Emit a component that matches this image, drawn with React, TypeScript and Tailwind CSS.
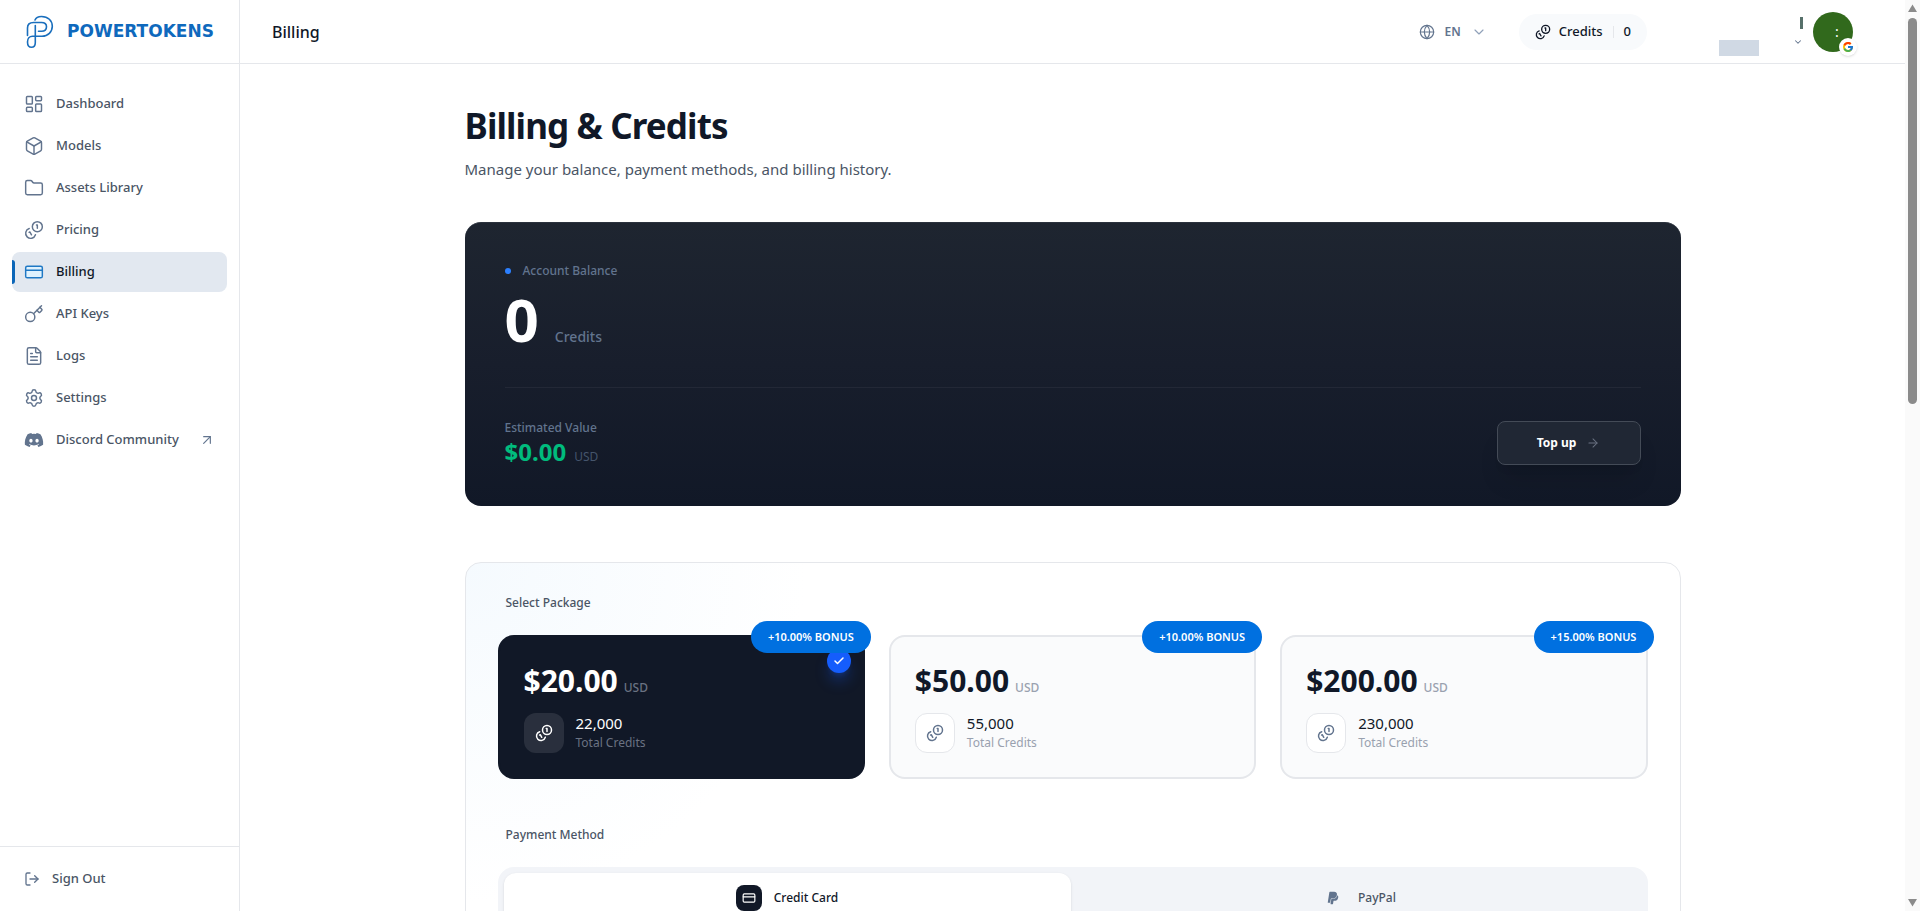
import React, { useState } from 'react';
import {
  ArrowRight,
  ArrowUpRight,
  Box,
  Check,
  ChevronDown,
  CreditCard,
  FileText,
  Folder,
  Globe,
  Key,
  LayoutDashboard,
  LogOut,
  Settings,
} from 'lucide-react';
import { FaDiscord, FaPaypal } from 'react-icons/fa';
import { FcGoogle } from 'react-icons/fc';

interface NavItem {
  label: string;
  icon: React.ElementType;
  external?: boolean;
}

interface Package {
  price: string;
  credits: string;
  bonus: string;
}

interface CoinsProps {
  size?: number;
  strokeWidth?: number;
  className?: string;
}

const Coins: React.FC<CoinsProps> = ({ size = 20, strokeWidth = 1.75, className }) => (
  <svg
    width={size}
    height={size}
    viewBox="0 0 24 24"
    fill="none"
    stroke="currentColor"
    strokeWidth={strokeWidth}
    strokeLinecap="round"
    strokeLinejoin="round"
    className={className}
  >
    <path d="M13.744 17.736a6 6 0 1 1-7.48-7.48" />
    <path d="M15 6h1v4" />
    <path d="m6.134 14.768.866-.5 2 3.464" />
    <circle cx="16" cy="8" r="6" />
  </svg>
);

const NAV: NavItem[] = [
  { label: 'Dashboard', icon: LayoutDashboard },
  { label: 'Models', icon: Box },
  { label: 'Assets Library', icon: Folder },
  { label: 'Pricing', icon: Coins },
  { label: 'Billing', icon: CreditCard },
  { label: 'API Keys', icon: Key },
  { label: 'Logs', icon: FileText },
  { label: 'Settings', icon: Settings },
  { label: 'Discord Community', icon: FaDiscord, external: true },
];

const PACKAGES: Package[] = [
  { price: '$20.00', credits: '22,000', bonus: '+10.00% BONUS' },
  { price: '$50.00', credits: '55,000', bonus: '+10.00% BONUS' },
  { price: '$200.00', credits: '230,000', bonus: '+15.00% BONUS' },
];

const METHODS = [
  { id: 'card', label: 'Credit Card', icon: CreditCard },
  { id: 'paypal', label: 'PayPal', icon: FaPaypal },
];

const Logo = () => (
  <a href="#" className="flex h-16 shrink-0 items-center gap-3 border-b border-gray-200 pl-6">
    <svg width="31" height="34" viewBox="0 0 31 34" fill="none" stroke="#1a6fbd" strokeWidth="1.6" strokeLinecap="round">
      <path d="M11 5C12 2.500 14.500 1.500 17.500 1.500C24 1.500 28.300 5.500 28.300 11.300C28.300 17 24 21.300 18 21.300H8.500C5.500 21.300 3.500 23.500 3.500 27C3.500 30.300 5.200 32.300 7.500 32.300C10 32.300 11.300 30.300 11.300 27.500V10.500" />
      <path d="M3.500 20.500V13C3.500 9.500 6 7.500 9.500 7.500H17.500C20.500 7.500 22.500 9.300 22.500 11.800C22.500 14.400 20.500 16.200 17.500 16.200H14.500" />
    </svg>
    <span className="font-['DejaVu_Sans',sans-serif] text-[17px] font-bold text-[#0f69bd]">POWERTOKENS</span>
  </a>
);

const Sidebar = () => (
  <aside className="flex w-60 shrink-0 flex-col border-r border-gray-200">
    <Logo />
    <nav className="flex flex-1 flex-col gap-0.5 px-3 py-5">
      {NAV.map(({ label, icon: Icon, external }) => {
        const active = label === 'Billing';
        return (
          <a
            key={label}
            href="#"
            className={
              active
                ? 'relative flex h-10 items-center gap-3 rounded-lg bg-slate-200 px-3 text-[13px] font-medium text-gray-900'
                : 'flex h-10 items-center gap-3 rounded-lg px-3 text-[13px] font-medium text-gray-600'
            }
          >
            {active && <span className="absolute top-2 left-0 h-6 w-[3px] rounded-r-full bg-[#0b66b8]" />}
            <Icon size={20} strokeWidth={external ? 0 : 1.75} className={active ? 'fill-sky-100 text-[#1f78c4]' : 'text-slate-500'} />
            <span className="flex-1">{label}</span>
            {external && <ArrowUpRight size={16} strokeWidth={1.75} className="text-slate-500" />}
          </a>
        );
      })}
    </nav>
    <div className="border-t border-gray-200 p-3">
      <button className="flex h-10 w-full items-center gap-3 px-3 text-[13px] font-medium text-gray-600">
        <LogOut size={16} strokeWidth={2} className="text-slate-500" />
        Sign Out
      </button>
    </div>
  </aside>
);

const Header = () => (
  <header className="flex h-16 shrink-0 items-center justify-between border-b border-gray-200 pr-13 pl-8">
    <span className="text-base font-medium text-gray-900">Billing</span>
    <div className="flex items-center">
      <button className="mr-8 flex items-center gap-2.5 text-xs font-semibold text-slate-500">
        <Globe size={16} strokeWidth={1.75} />
        EN
        <ChevronDown size={16} strokeWidth={1.75} className="text-slate-400" />
      </button>
      <a href="#" className="mr-18 flex h-9 items-center gap-2 rounded-full bg-slate-50 px-4 text-[13px] font-medium text-gray-900">
        <Coins size={16} strokeWidth={2} />
        Credits
        <span className="mx-0.5 h-3 w-px bg-gray-200" />
        <span>0</span>
      </a>
      <button aria-label="Account" className="flex items-center gap-2.5">
        <span className="mt-8 mr-6 h-4 w-10 bg-[#d0d9e4]" />
        <span className="flex flex-col items-end gap-2">
          <span className="h-3 w-[3px] bg-[#56706a]" />
          <ChevronDown size={10} strokeWidth={2.5} className="text-slate-500" />
        </span>
        <span className="relative flex size-10 items-center justify-center rounded-full bg-[#31691c] pl-2 text-sm text-white">
          :
          <span className="absolute -right-1 -bottom-1 flex size-[18px] items-center justify-center rounded-full bg-white shadow-sm">
            <FcGoogle size={12} />
          </span>
        </span>
      </button>
    </div>
  </header>
);

const BalanceCard = () => (
  <section className="rounded-2xl border-t border-[#2b323d] bg-linear-to-b from-[#1e2530] via-[#181e2c] to-[#111827] p-10">
    <div className="flex items-center gap-3 text-xs font-medium text-slate-500">
      <span className="size-1.5 rounded-full bg-blue-500" />
      Account Balance
    </div>
    <div className="mt-2.5 flex items-baseline gap-4">
      <span className="text-6xl font-bold text-white">0</span>
      <span className="text-sm font-medium text-slate-500">Credits</span>
    </div>
    <div className="mt-[38px] flex items-center justify-between border-t border-white/5 pt-8">
      <div>
        <div className="text-xs font-medium text-slate-500">Estimated Value</div>
        <div className="mt-0.5 flex items-baseline gap-2">
          <span className="text-2xl leading-7 font-bold text-emerald-500">$0.00</span>
          <span className="text-xs text-slate-600">USD</span>
        </div>
      </div>
      <button className="flex h-11 w-36 items-center justify-center gap-2.5 rounded-lg border border-[#444b57] bg-[#202734] text-xs font-bold text-white shadow-xl">
        Top up
        <ArrowRight size={14} strokeWidth={1.75} className="text-gray-500" />
      </button>
    </div>
  </section>
);

interface PackageCardProps {
  item: Package;
  selected: boolean;
  onSelect: () => void;
}

const PackageCard: React.FC<PackageCardProps> = ({ item, selected, onSelect }) => (
  <button
    onClick={onSelect}
    aria-pressed={selected}
    className={
      selected
        ? 'relative rounded-2xl border-2 border-[#111827] bg-[#111827] p-6 text-left text-white'
        : 'relative rounded-2xl border-2 border-gray-200 bg-[#fafbfc] p-6 text-left text-gray-900'
    }
  >
    {selected && (
      <span className="absolute top-3 right-3 flex size-6 items-center justify-center rounded-full bg-blue-600 shadow-lg shadow-blue-600/40">
        <Check size={12} strokeWidth={3} className="text-white" />
      </span>
    )}
    <span className="absolute -top-4 -right-2 flex h-8 w-[120px] items-center justify-center rounded-full bg-[#0070e0] text-[11px] font-semibold whitespace-nowrap text-white">
      {item.bonus}
    </span>
    <div className="flex items-baseline gap-1.5">
      <span className="text-3xl leading-10 font-bold">{item.price}</span>
      <span className={selected ? 'text-xs font-medium text-gray-500' : 'text-xs font-medium text-gray-400'}>USD</span>
    </div>
    <div className="mt-3 flex items-center gap-3">
      <span
        className={
          selected
            ? 'flex size-10 items-center justify-center rounded-xl bg-white/10 text-white'
            : 'flex size-10 items-center justify-center rounded-xl border border-gray-200 bg-white text-slate-500'
        }
      >
        <Coins size={18} strokeWidth={2} />
      </span>
      <span className="flex flex-col">
        <span className="text-[15px] leading-5">{item.credits}</span>
        <span className={selected ? 'text-xs leading-5 text-gray-500' : 'text-xs leading-5 text-gray-400'}>Total Credits</span>
      </span>
    </div>
  </button>
);

const TopUpPanel = () => {
  const [selected, setSelected] = useState(0);
  const [method, setMethod] = useState('card');

  return (
    <section className="rounded-2xl border border-gray-200 bg-[radial-gradient(circle_at_top_left,#f5fafe,#ffffff_340px)] p-8">
      <h2 className="mb-6 px-2 text-xs font-medium text-gray-600">Select Package</h2>
      <div className="grid grid-cols-3 gap-6">
        {PACKAGES.map((item, i) => (
          <PackageCard key={item.price} item={item} selected={selected === i} onSelect={() => setSelected(i)} />
        ))}
      </div>
      <h2 className="mt-12 mb-6 px-2 text-xs font-medium text-gray-600">Payment Method</h2>
      <div className="grid grid-cols-2 gap-1 rounded-2xl bg-[#f2f4f8] p-1.5">
        {METHODS.map(({ id, label, icon: Icon }) => (
          <button
            key={id}
            onClick={() => setMethod(id)}
            aria-pressed={method === id}
            className={
              method === id
                ? 'flex h-[50px] items-center justify-center gap-3 rounded-xl bg-white text-xs font-medium text-gray-900 shadow-sm'
                : 'flex h-[50px] items-center justify-center gap-3 rounded-xl text-xs font-medium text-gray-600'
            }
          >
            <span
              className={
                method === id
                  ? 'flex size-[26px] items-center justify-center rounded-lg bg-[#111827] text-white'
                  : 'flex size-[26px] items-center justify-center text-slate-500'
              }
            >
              <Icon size={14} />
            </span>
            {label}
          </button>
        ))}
      </div>
    </section>
  );
};

// Window scroll rail
const ScrollRail = () => (
  <div aria-hidden="true" className="flex w-[15px] shrink-0 flex-col items-center justify-between bg-[#fafafa] py-1">
    <div className="flex flex-col items-center gap-1.5">
      <svg width="9" height="8" viewBox="0 0 9 8" fill="#8b8b8b"><path d="M4.500 0.500L9 8H0Z" /></svg>
      <div className="h-[386px] w-[9px] rounded-full bg-[#8b8b8b]" />
    </div>
    <svg width="9" height="8" viewBox="0 0 9 8" fill="#8b8b8b"><path d="M4.500 7.500L9 0H0Z" /></svg>
  </div>
);

const App = () => (
  <div className="flex h-screen overflow-hidden bg-white font-['Noto_Sans',sans-serif]">
    <Sidebar />
    <div className="flex min-w-0 flex-1 flex-col">
      <Header />
      <main className="flex-1 overflow-hidden">
        <div className="mx-auto max-w-7xl px-8 py-10">
          <h1 className="text-[35px] leading-11 font-bold tracking-tight text-gray-900">Billing &amp; Credits</h1>
          <p className="mt-2 mb-10 text-[15px] leading-[26px] text-gray-600">
            Manage your balance, payment methods, and billing history.
          </p>
          <div className="flex flex-col gap-14">
            <BalanceCard />
            <TopUpPanel />
          </div>
        </div>
      </main>
    </div>
    <ScrollRail />
  </div>
);

export default App;
